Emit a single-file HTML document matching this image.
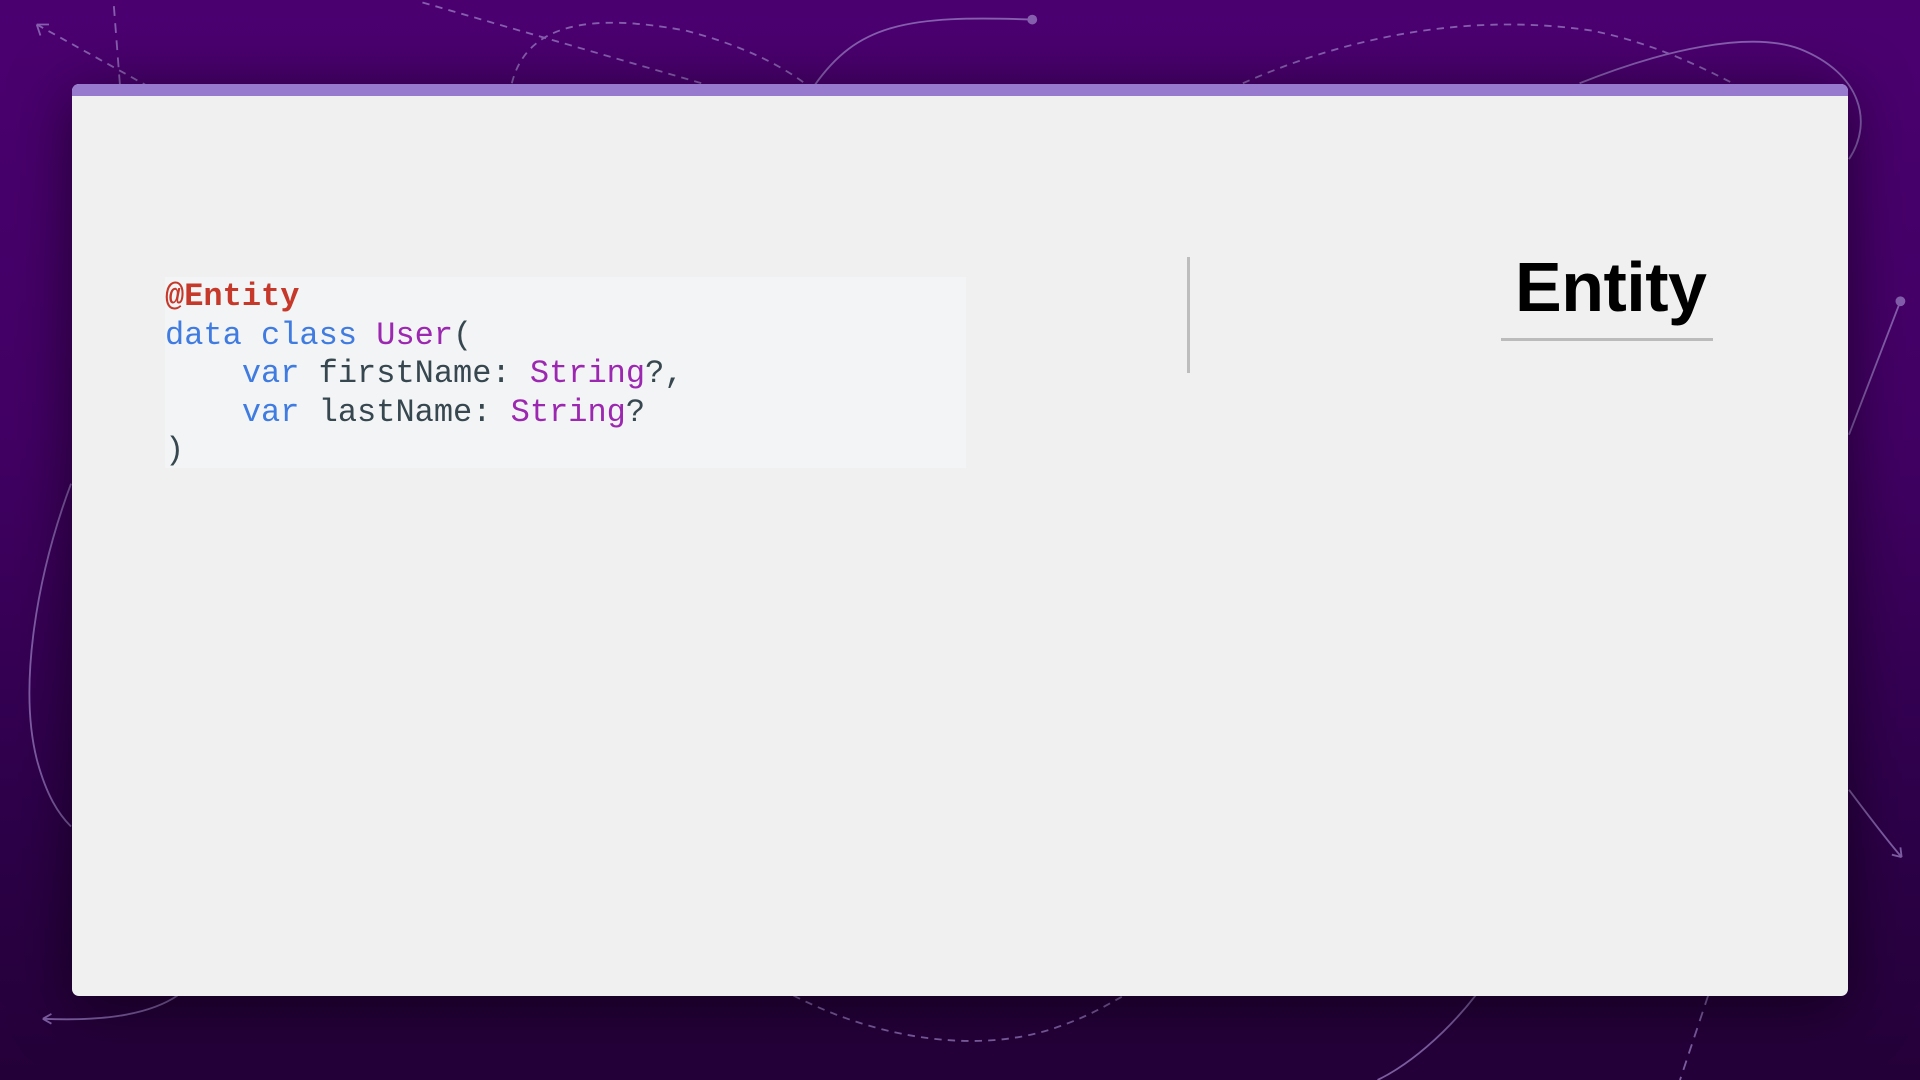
<!DOCTYPE html>
<html><head><meta charset="utf-8"><style>
html,body{margin:0;padding:0}
body{width:1920px;height:1080px;overflow:hidden;position:relative;background:linear-gradient(180deg,#4b0070 0%,#420064 40%,#2e004a 75%,#240038 100%);font-family:"Liberation Sans",sans-serif}
svg.bg{position:absolute;left:0;top:0}
.card{position:absolute;left:72px;top:84px;width:1776px;height:912px;background:#f0f0f0;border-radius:7px;overflow:hidden;box-shadow:0 10px 60px rgba(0,0,0,.55)}
.bar{position:absolute;left:0;top:0;right:0;height:12px;background:#9779cd}
.code{position:absolute;left:93px;top:193px;width:801px;height:191px;background:#f3f4f5}
pre{margin:0;position:absolute;left:93px;top:194px;font-family:"Liberation Mono",monospace;font-size:32px;line-height:38.6px;color:#37474f;letter-spacing:0}
.a{color:#c5382a;font-weight:bold}.k{color:#3f7be0}.t{color:#9c27b0}
.div{position:absolute;left:1115px;top:173px;width:3px;height:116px;background:#bdbdbd}
.title{position:absolute;left:1443px;top:168px;font-size:70px;font-weight:bold;color:#000;letter-spacing:-0.5px;line-height:70px;white-space:nowrap}
.ul{position:absolute;left:1429px;top:254px;width:212px;height:3px;background:#bbb}
</style></head><body>
<svg class="bg" width="1920" height="1080" viewBox="0 0 1568 882" fill="none" stroke="#9a7ec4" stroke-width="1.5" opacity="0.75">
<path d="M30 20 L120 70" stroke-dasharray="6 5"/>
<path d="M30 20 l10 0 M30 20 l3 9"/>
<path d="M93 5 L98 70" stroke-dasharray="8 6"/>
<path d="M345 2 L580 70" stroke-dasharray="6 5"/>
<path d="M418 68 C430 20 480 10 560 25 C610 38 640 55 660 70" stroke-dasharray="6 5"/>
<path d="M665 70 C700 20 740 12 843 16"/>
<circle cx="843" cy="16" r="4" fill="#9a7ec4" stroke="none"/>
<path d="M1015 68 C1100 30 1200 10 1300 25 C1350 35 1390 55 1415 68" stroke-dasharray="6 5"/>
<path d="M1290 68 C1360 40 1430 25 1470 40 C1520 60 1530 100 1510 130"/>
<path d="M1552 246 L1510 355"/>
<circle cx="1552" cy="246" r="4" fill="#9a7ec4" stroke="none"/>
<path d="M1510 645 C1525 665 1540 685 1553 700"/>
<path d="M1553 700 l-8 -2 M1553 700 l-1 -8"/>
<path d="M58 395 C30 470 15 560 30 620 C38 650 48 665 58 675"/>
<path d="M145 813 C120 830 80 834 35 832"/>
<path d="M35 832 l7 -4 M35 832 l7 4"/>
<path d="M648 813 C720 850 800 860 860 840 C890 830 905 820 918 813" stroke-dasharray="6 5"/>
<path d="M1205 813 C1180 845 1150 870 1125 882"/>
<path d="M1395 813 L1372 882" stroke-dasharray="8 6"/>
</svg>
<div class="card">
<div class="bar"></div>
<div class="code"></div>
<pre><span class="a">@Entity</span>
<span class="k">data class</span> <span class="t">User</span>(
    <span class="k">var</span> firstName: <span class="t">String</span>?,
    <span class="k">var</span> lastName: <span class="t">String</span>?
)</pre>
<div class="div"></div>
<div class="title">Entity</div>
<div class="ul"></div>
</div>
</body></html>
